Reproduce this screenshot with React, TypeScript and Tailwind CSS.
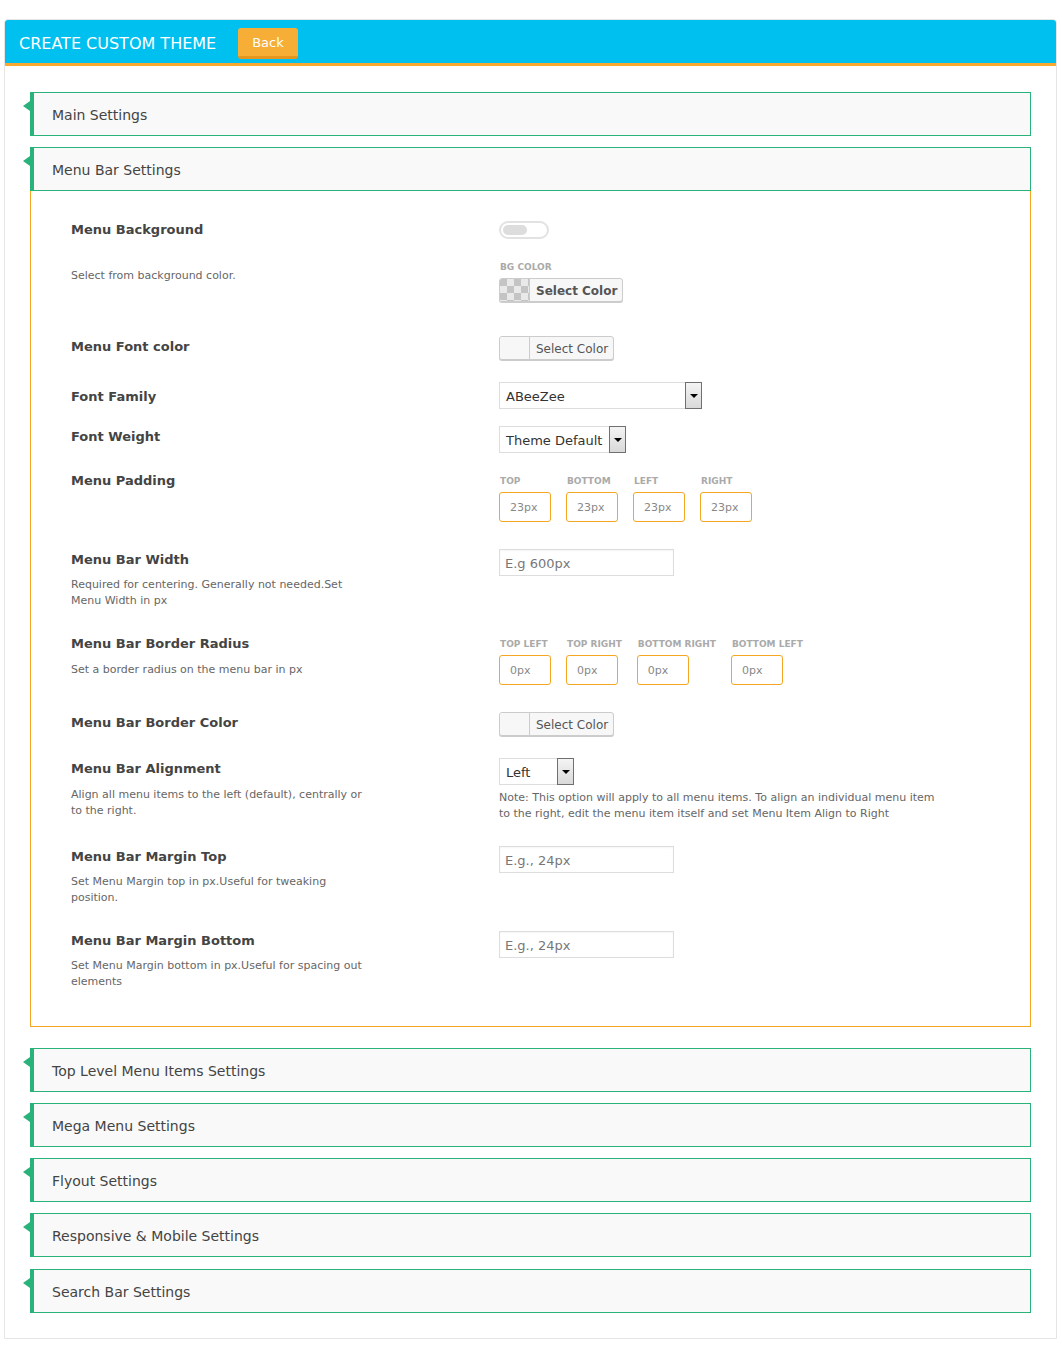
import React from "react";

function AccHeader({ title }: { title: string }) {
  return (
    <div className="relative h-[44px] border border-l-4 border-[#2ab27b] bg-[#f9f9f9] flex items-center pl-[18px] pt-[2px] text-[14px] text-[#444]">
      <span className="absolute left-[-11px] top-[8px] w-0 h-0 border-y-[5px] border-y-transparent border-r-[7px] border-r-[#2ab27b]" />
      {title}
    </div>
  );
}

function Label({ children }: { children: React.ReactNode }) {
  return <div className="pt-[1px] text-[13px] font-bold leading-4 text-[#444]">{children}</div>;
}

function Desc({ children, className }: { children: React.ReactNode; className: string }) {
  return <div className={"text-[11px] leading-4 text-[#666] max-w-[296px] " + className}>{children}</div>;
}

function SubLabel({ children }: { children: React.ReactNode }) {
  return (
    <div className="pt-[3px] h-[18px] pl-[1px] text-[9px] font-bold leading-4 uppercase text-[#aaa] whitespace-nowrap">
      {children}
    </div>
  );
}

function Checker() {
  return (
    <svg width="30" height="22" viewBox="0 0 30 22" className="block">
      <rect width="30" height="22" fill="#e9e9e9" />
      {[0, 1, 2, 3, 4].map((c) =>
        [0, 1, 2, 3].map((r) =>
          (c + r) % 2 === 0 ? (
            <rect key={c + "-" + r} x={c * 7} y={r * 7} width="7" height="7" fill="#c4c4c4" />
          ) : null
        )
      )}
    </svg>
  );
}

function ColorButton({ bold, checker }: { bold?: boolean; checker?: boolean }) {
  return (
    <div
      className={
        "flex h-[24px] items-stretch rounded-[3px] border border-[#cccccc] bg-[#f7f7f7] shadow-[0_1px_0_#cccccc] overflow-hidden " +
        (bold ? "w-[124px]" : "w-[115px]")
      }
    >
      <div className="w-[30px] shrink-0 border-r border-[#cccccc] bg-[#f7f7f7] overflow-hidden">
        {checker ? <Checker /> : null}
      </div>
      <div
        className={
          "flex items-center pl-[6px] pt-[1px] text-[12px] text-[#555] whitespace-nowrap " + (bold ? "font-bold" : "")
        }
      >
        Select Color
      </div>
    </div>
  );
}

function SelectBox({ value, w }: { value: string; w: string }) {
  return (
    <div className={"flex h-[27px] items-stretch border border-[#dddddd] bg-white " + w}>
      <div className="flex flex-1 items-center pl-[6px] pt-[2px] text-[13px] text-[#333] whitespace-nowrap">{value}</div>
      <div className="flex w-[17px] shrink-0 items-center justify-center border border-[#707070] bg-gradient-to-b from-[#f4f4f4] to-[#d9d9d9] -my-[1px] -mr-[1px]">
        <span className="w-0 h-0 border-x-[4px] border-x-transparent border-t-[4px] border-t-black" />
      </div>
    </div>
  );
}

function TextInput({ placeholder }: { placeholder: string }) {
  return (
    <div className="flex h-[27px] w-[175px] items-center border border-[#dddddd] bg-white pl-[5px] pt-[2px] text-[13px] text-[#777] shadow-[inset_0_1px_2px_rgba(0,0,0,0.04)]">
      {placeholder}
    </div>
  );
}

function SmallInput({ value }: { value: string }) {
  return (
    <div className="mt-[4px] flex h-[30px] w-[52px] items-center rounded-[3px] border border-[#f5a623] bg-white pl-[10px] pt-[2px] text-[11px] text-[#888]">
      {value}
    </div>
  );
}

function Row({
  className,
  left,
  right,
}: {
  className: string;
  left: React.ReactNode;
  right: React.ReactNode;
}) {
  return (
    <div className={"flex " + className}>
      <div className="w-[428px] shrink-0">{left}</div>
      <div className="flex-1">{right}</div>
    </div>
  );
}

export default function App() {
  return (
    <div className="min-h-[1345px] bg-white font-['DejaVu_Sans','Verdana',sans-serif] pt-[19px]">
      <div className="ml-[4px] mr-[5px] rounded-t-[4px] border border-[#e5e5e5] bg-white">
        {/* Header */}
        <div className="flex h-[46px] items-center border-b-[3px] border-[#f8a830] bg-[#00c0ef] pl-[14px] rounded-t-[3px]">
          <div className="mt-[4px] text-[16px] text-white uppercase">Create Custom Theme</div>
          <div className="ml-[22px] mt-[4px] flex h-[31px] items-center rounded-[3px] border-b-[3px] border-[#e5961f] bg-[#f6ae36] px-[14px] pt-[1px] text-[13px] text-white">
            Back
          </div>
        </div>

        <div className="px-[25px] pt-[26px] pb-[25px]">
          <div className="mb-[11px]">
            <AccHeader title="Main Settings" />
          </div>
          <AccHeader title="Menu Bar Settings" />

          {/* Content box */}
          <div className="border-x border-b border-[#f5a623] pl-[40px] pt-[30px] mb-[21px]">
            <Row
              className="h-[115px]"
              left={
                <>
                  <Label>Menu Background</Label>
                  <Desc className="mt-[30px]">Select from background color.</Desc>
                </>
              }
              right={
                <>
                  <div className="relative h-[18px] w-[50px] rounded-full border-2 border-[#e2e2e2] bg-white">
                    <div className="absolute left-[2px] top-[2px] h-[10px] w-[24px] rounded-full bg-[#dddddd]" />
                  </div>
                  <div className="mt-[22px] pl-[1px] text-[9px] font-bold leading-3 text-[#aaa]">BG COLOR</div>
                  <div className="mt-[5px]">
                    <ColorButton bold checker />
                  </div>
                </>
              }
            />
            <Row
              className="h-[46px]"
              left={
                <div className="pt-[2px]">
                  <Label>Menu Font color</Label>
                </div>
              }
              right={<ColorButton />}
            />
            <Row
              className="h-[44px]"
              left={
                <div className="pt-[6px]">
                  <Label>Font Family</Label>
                </div>
              }
              right={<SelectBox value="ABeeZee" w="w-[203px]" />}
            />
            <Row
              className="h-[44px]"
              left={
                <div className="pt-[2px]">
                  <Label>Font Weight</Label>
                </div>
              }
              right={<SelectBox value="Theme Default" w="w-[127px]" />}
            />
            <Row
              className="h-[79px]"
              left={
                <div className="pt-[2px]">
                  <Label>Menu Padding</Label>
                </div>
              }
              right={
                <div className="flex gap-[15px]">
                  {["Top", "Bottom", "Left", "Right"].map((s) => (
                    <div key={s}>
                      <SubLabel>{s}</SubLabel>
                      <SmallInput value="23px" />
                    </div>
                  ))}
                </div>
              }
            />
            <Row
              className="h-[84px]"
              left={
                <div className="pt-[2px]">
                  <Label>Menu Bar Width</Label>
                  <Desc className="mt-[9px]">Required for centering. Generally not needed.Set Menu Width in px</Desc>
                </div>
              }
              right={<TextInput placeholder="E.g 600px" />}
            />
            <Row
              className="h-[79px]"
              left={
                <div className="pt-[2px]">
                  <Label>Menu Bar Border Radius</Label>
                  <Desc className="mt-[10px]">Set a border radius on the menu bar in px</Desc>
                </div>
              }
              right={
                <div className="flex gap-[15px]">
                  {["Top Left", "Top Right", "Bottom Right", "Bottom Left"].map((s) => (
                    <div key={s} className="min-w-[52px]">
                      <SubLabel>{s}</SubLabel>
                      <SmallInput value="0px" />
                    </div>
                  ))}
                </div>
              }
            />
            <Row
              className="h-[46px]"
              left={
                <div className="pt-[2px]">
                  <Label>Menu Bar Border Color</Label>
                </div>
              }
              right={<ColorButton />}
            />
            <Row
              className="h-[88px]"
              left={
                <div className="pt-[2px]">
                  <Label>Menu Bar Alignment</Label>
                  <Desc className="mt-[10px]">
                    Align all menu items to the left (default), centrally or to the right.
                  </Desc>
                </div>
              }
              right={
                <>
                  <SelectBox value="Left" w="w-[75px]" />
                  <div className="mt-[5px] max-w-[442px] text-[11px] leading-4 text-[#666]">
                    Note: This option will apply to all menu items. To align an individual menu item to the right,
                    edit the menu item itself and set Menu Item Align to Right
                  </div>
                </>
              }
            />
            <Row
              className="h-[85px]"
              left={
                <div className="pt-[2px]">
                  <Label>Menu Bar Margin Top</Label>
                  <Desc className="mt-[9px]">Set Menu Margin top in px.Useful for tweaking position.</Desc>
                </div>
              }
              right={<TextInput placeholder="E.g., 24px" />}
            />
            <Row
              className="h-[95px]"
              left={
                <div className="pt-[1px]">
                  <Label>Menu Bar Margin Bottom</Label>
                  <Desc className="mt-[9px]">Set Menu Margin bottom in px.Useful for spacing out elements</Desc>
                </div>
              }
              right={<TextInput placeholder="E.g., 24px" />}
            />
          </div>

          <div className="flex flex-col gap-[11px]">
            <AccHeader title="Top Level Menu Items Settings" />
            <AccHeader title="Mega Menu Settings" />
            <AccHeader title="Flyout Settings" />
            <AccHeader title="Responsive & Mobile Settings" />
            <div className="mt-[1px]">
              <AccHeader title="Search Bar Settings" />
            </div>
          </div>
        </div>
      </div>
    </div>
  );
}
